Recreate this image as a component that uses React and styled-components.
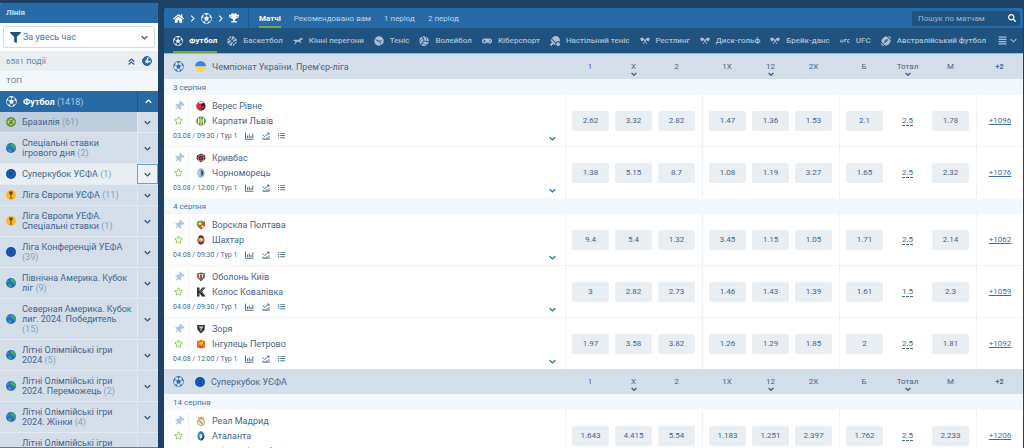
import React, { useState } from 'react';
import styled, { createGlobalStyle, css } from 'styled-components';
import {
    FaHome,
    FaTrophy,
    FaSearch,
    FaFilter,
    FaThumbtack,
    FaRegStar,
    FaBasketballBall,
    FaVolleyballBall,
    FaGamepad,
    FaTableTennis,
    FaFootballBall,
    FaAlignJustify,
    FaListUl
} from 'react-icons/fa';

const GlobalStyle = createGlobalStyle`
  * {
    box-sizing: border-box;
  }
  body {
    margin: 0;
    background: #1c4165;
    font-family: Roboto, "Liberation Sans", sans-serif;
    font-size: 9px;
    color: #48648a;
  }
  button, input, select {
    font: inherit;
    color: inherit;
    border: 0;
    padding: 0;
    margin: 0;
    background: none;
  }
  button {
    cursor: pointer;
  }
  a {
    color: inherit;
    text-decoration: none;
  }
  svg {
    display: block;
    flex: none;
  }
`;

/* ---------- icons ---------- */

const BallIcon = ({ size = 11 }) => (
    <svg width={size} height={size} viewBox="0 0 22 22" aria-hidden="true">
        <circle cx="11" cy="11" r="10" fill="none" stroke="currentColor" strokeWidth="1.3" />
        <path fill="currentColor" d="M11 6.500l4.500 3.200-1.700 5.300H8.200L6.500 9.700z" />
        <path fill="currentColor" d="M7 1.500L11 4l4-2.500C12.500.4 9.500.4 7 1.500zM1 11l3.300-2.800.2-4.700C1.800 5.500 1 8 1 11zM21 11l-3.300-2.800-.2-4.700c2.700 2 3.500 4.500 3.500 7.500zM3 17l4.400.5 1.500 3.700C6.300 20.500 4.300 19.200 3 17zM19 17l-4.400.5-1.500 3.700c2.600-.7 4.600-2 5.900-4.200z" />
        <path fill="none" stroke="currentColor" strokeWidth="1" d="M11 3v4M7 9.700L3.500 8M15 9.700L18.500 8M8.500 14.500l-1.500 3.500M13.500 14.500l1.500 3.500" />
    </svg>
);

const Chevron = ({ dir = 'down', size = 7, weight = 2 }) => {
    const turn = { down: 0, up: 180, right: 270 };
    return (
        <svg width={size} height={size} viewBox="0 0 10 10" aria-hidden="true">
            <path
                d="M1 3.200l4 3.800 4-3.800"
                fill="none"
                stroke="currentColor"
                strokeWidth={weight}
                transform={`rotate(${turn[dir]} 5 5)`}
            />
        </svg>
    );
};

const DoubleUpIcon = () => (
    <svg width="7" height="7" viewBox="0 0 10 10" aria-hidden="true">
        <path d="M1 5l4-3.500L9 5M1 9.200l4-3.500 4 3.500" fill="none" stroke="currentColor" strokeWidth="1.800" />
    </svg>
);

const WorldIcon = () => (
    <svg width="10" height="10" viewBox="0 0 20 20" aria-hidden="true">
        <circle cx="10" cy="10" r="9" fill="none" stroke="currentColor" strokeWidth="2" />
        <path fill="currentColor" d="M11 1a9 9 0 0 0-10 9c0 5 4 9 9 9 4 0 7-2 8-6l-4-1-3 3-4-2-1-3 3-2 1-3zM13 4l4 2 1 4-4 0-2-3z" />
    </svg>
);

const HorseIcon = () => (
    <svg width="10" height="8" viewBox="0 0 22 16" aria-hidden="true">
        <path fill="currentColor" d="M1 6l4-1 8 .5L17 1l5 2-1 2-3-.5-2 4.500 3 3-1 1-4-3-5-.5-3 4-3 2.500-.5-1L5 12l-.5-4L1 8z" />
    </svg>
);

const TennisIcon = () => (
    <svg width="10" height="10" viewBox="0 0 20 20" aria-hidden="true">
        <circle cx="10" cy="10" r="9.500" fill="currentColor" />
        <path fill="none" stroke="#205280" strokeWidth="1.500" d="M2 5c3 6 9 6 14 4M6 8c4 1 8 5 8 11" />
    </svg>
);

const FlagsIcon = () => (
    <svg width="10" height="8" viewBox="0 0 20 16" aria-hidden="true">
        <path fill="currentColor" d="M0 3l4-2 4 2 1 3-3 1-3 2zM20 3l-4-2-4 2-1 3 3 1 3 2z" />
        <path stroke="currentColor" strokeWidth="1.800" d="M7 4l7 10M13 4L6 14" />
    </svg>
);

const UfcIcon = () => (
    <svg width="10" height="4" viewBox="0 0 20 8" aria-hidden="true">
        <path fill="none" stroke="currentColor" strokeWidth="1.800" d="M2 1L1 6h4l1-5M8 7l1-6h5M8.500 4h4M19 1h-3l-1 5.500h4" />
    </svg>
);

const ChartIcon = () => (
    <svg width="9" height="8" viewBox="0 0 18 16" aria-hidden="true">
        <path fill="none" stroke="currentColor" strokeWidth="2" d="M1 1v13.500h16M5 12V7M8.500 12V5M12 12V8M15.500 12V3" />
    </svg>
);

const TrendIcon = () => (
    <svg width="8" height="8" viewBox="0 0 16 16" aria-hidden="true">
        <path fill="none" stroke="currentColor" strokeWidth="1.800" d="M1 5l4 4 3-2 6-5M10 2h4v4M1 14.500h14M2 14v-3M6 14v-2M10 14v-4M14 14V8" />
    </svg>
);

const BrazilFlag = () => (
    <svg width="10" height="10" viewBox="0 0 20 20" aria-hidden="true">
        <circle cx="10" cy="10" r="10" fill="#5d9b35" />
        <path fill="#f2d649" d="M10 3l8 7-8 7-8-7z" />
        <circle cx="10" cy="10" r="4" fill="#3f6f86" />
        <path d="M6.500 9q4-1 7 2.500" stroke="#dfe8d8" fill="none" />
    </svg>
);

const GlobeFlag = () => (
    <svg width="10" height="10" viewBox="0 0 20 20" aria-hidden="true">
        <circle cx="10" cy="10" r="10" fill="#2f63e0" />
        <path fill="#2fb457" d="M9 1l6 1 4 5 0 5-3 1-2-4-4-1-1-3zM3 4l3 1-1 3-4 2 1-4zM5 11l5 2 1 3-3 3-3-2z" />
    </svg>
);

const EuropeFlag = () => (
    <svg width="10" height="10" viewBox="0 0 20 20" aria-hidden="true">
        <circle cx="10" cy="10" r="10" fill="#0b4fb0" />
        <circle cx="10" cy="10" r="5.500" fill="none" stroke="#6f8f9c" strokeWidth="1.500" strokeDasharray="1.500 1.400" />
    </svg>
);

const CupFlag = () => (
    <svg width="10" height="10" viewBox="0 0 20 20" aria-hidden="true">
        <circle cx="10" cy="10" r="10" fill="#fdb827" />
        <path fill="#74491a" d="M6 3h8l-1 5-2 2v5l2 2H7l2-2v-5L7 8z" />
    </svg>
);

const UkraineFlag = () => (
    <svg width="11" height="11" viewBox="0 0 20 20" aria-hidden="true">
        <path fill="#3a86e8" d="M0 10a10 10 0 0 1 20 0z" />
        <path fill="#ffd94a" d="M0 10a10 10 0 0 0 20 0z" />
    </svg>
);

const crests = {
    veres: (
        <>
            <circle cx="10" cy="10" r="9" fill="#2b2526" />
            <path fill="#d23239" d="M10 1a9 9 0 0 0 0 18zM11 9l5 1-1 5-4 1z" />
            <path fill="#eee" d="M5 2h10l-2 3H6z" />
        </>
    ),
    karpaty: (
        <>
            <circle cx="10" cy="10" r="9.500" fill="#3f9560" />
            <path stroke="#eef5e9" strokeWidth="2" d="M5 3v14M10 1v4M10 15v4M15 3v14" />
            <path fill="#d9bd49" d="M6 6h8v7l-4 3-4-3z" />
        </>
    ),
    kryvbas: (
        <>
            <path fill="#46262c" d="M10 1l8 4 1 7-9 7-9-7 1-7z" />
            <circle cx="10" cy="10" r="6" fill="none" stroke="#e0a5a6" strokeWidth="1.500" />
            <circle cx="10" cy="10" r="3" fill="#c8323c" />
        </>
    ),
    chornomorets: (
        <>
            <ellipse cx="10" cy="10" rx="7.500" ry="9.500" fill="#8db5de" />
            <path fill="#263f63" d="M10 4c6 1 6 11 0 12 2-4 2-4 0-6 2-2 1-3 0-6z" />
            <path stroke="#fff" strokeWidth="1.500" d="M6 5v10" />
        </>
    ),
    vorskla: (
        <>
            <path fill="#56a53c" d="M2 3l8-2 8 2v8l-8 8-8-7z" />
            <path fill="#e2432f" d="M9 8l9-4v8l-8 7-5-5z" />
            <circle cx="8" cy="7" r="3" fill="#f3e35e" />
            <circle cx="13" cy="13" r="2.500" fill="#f7d7b0" />
        </>
    ),
    shakhtar: (
        <>
            <ellipse cx="10" cy="10" rx="7" ry="9.500" fill="#4b3b35" />
            <path fill="#e6793b" d="M4 6h12l1 6-7 3-7-3z" />
            <path fill="#f3d2bb" d="M7 8l3-3 3 3v3H7z" />
        </>
    ),
    obolon: (
        <>
            <path fill="#2f7b50" d="M2 3l8-2 8 2-1 9-7 7-7-7z" />
            <path fill="#e8e3dd" d="M5 4h10l-2 9H7z" />
            <path fill="#c73d3a" d="M8 5h4v9l-2 4-2-4zM3 6l3 1v3l-3 0zM17 6l-3 1v3l3 0z" />
        </>
    ),
    kolos: (
        <>
            <path fill="#26292c" d="M2 1h5v7l6-7h6l-7 8 7 10h-7l-5-7v7H2z" />
            <path stroke="#777c7f" strokeWidth="1.500" d="M3 4l14 12M15 2L4 16" />
        </>
    ),
    zorya: (
        <>
            <path fill="#34363a" d="M2 2h16l-1 10-7 7-7-7z" />
            <path fill="#c9cbcc" d="M5 5h10l-2 3-2 1v6l-2-2V9z" />
        </>
    ),
    inhulets: (
        <>
            <path fill="#f26b1f" d="M2 3l4 1 4-3 4 3 4-1 0 14-8 2-8-2z" />
            <path fill="#fbb42c" d="M6 6h8l-1 5-3 2-3-2z" />
            <path fill="#c83f1d" d="M5 13l5 2 5-2-5 5z" />
        </>
    ),
    real: (
        <>
            <circle cx="10" cy="12" r="7" fill="#f3ecd2" stroke="#c9a443" strokeWidth="2" />
            <path fill="#d9a73d" d="M4 1l3 2 3-2 3 2 3-2-2 6H6z" />
            <path stroke="#365a94" strokeWidth="2" d="M6 9l8 8" />
        </>
    ),
    atalanta: (
        <>
            <ellipse cx="10" cy="10" rx="7" ry="9.500" fill="#2f7dbb" />
            <path fill="#272e3a" d="M10 9c7-2 8 6 0 10z" />
            <path fill="#edf1f4" d="M7 6l5 1 1 6-4 3-2-5z" />
        </>
    )
};

const Crest = ({ name }) => (
    <svg width="10" height="10" viewBox="0 0 20 20" aria-hidden="true">
        {crests[name]}
    </svg>
);

/* ---------- data ---------- */

const tournaments = [
    { title: 'Бразилія', count: 61, Flag: BrazilFlag, state: 'hover' },
    { title: 'Спеціальні ставки ігрового дня', count: 2, Flag: GlobeFlag },
    { title: 'Суперкубок УЄФА', count: 1, Flag: EuropeFlag, state: 'active' },
    { title: 'Ліга Європи УЄФА', count: 11, Flag: CupFlag },
    { title: 'Ліга Європи УЕФА. Спеціальні ставки', count: 1, Flag: CupFlag },
    { title: 'Ліга Конференцій УЕФА', count: 39, Flag: EuropeFlag },
    { title: 'Північна Америка. Кубок ліг', count: 9, Flag: GlobeFlag },
    { title: 'Северная Америка. Кубок лиг. 2024. Победитель', count: 15, Flag: GlobeFlag },
    { title: 'Літні Олімпійські ігри 2024', count: 5, Flag: GlobeFlag },
    { title: 'Літні Олімпійські ігри 2024. Переможець', count: 2, Flag: GlobeFlag },
    { title: 'Літні Олімпійські ігри 2024. Жінки', count: 4, Flag: GlobeFlag },
    { title: 'Літні Олімпійські ігри 2024. Жінки. Переможець', count: 1, Flag: GlobeFlag }
];

const tabs = ['Матчі', 'Рекомендовано вам', '1 період', '2 період'];

const sports = [
    { title: 'Футбол', icon: <BallIcon size={10} /> },
    { title: 'Баскетбол', icon: <FaBasketballBall size={10} /> },
    { title: 'Кінні перегони', icon: <HorseIcon /> },
    { title: 'Теніс', icon: <TennisIcon /> },
    { title: 'Волейбол', icon: <FaVolleyballBall size={10} /> },
    { title: 'Кіберспорт', icon: <FaGamepad size={10} /> },
    { title: 'Настільний теніс', icon: <FaTableTennis size={10} /> },
    { title: 'Рестлинг', icon: <FlagsIcon /> },
    { title: 'Диск-гольф', icon: <FlagsIcon /> },
    { title: 'Брейк-данс', icon: <FlagsIcon /> },
    { title: 'UFC', icon: <UfcIcon /> },
    { title: 'Австралійський футбол', icon: <FaFootballBall size={10} /> }
];

const columns = [
    { title: '1' },
    { title: 'X', sortable: true },
    { title: '2' },
    { title: '1X' },
    { title: '12', sortable: true },
    { title: '2X' },
    { title: 'Б' },
    { title: 'Тотал', sortable: true },
    { title: 'М' }
];

const leagues = [
    {
        title: "Чемпіонат України. Прем'єр-ліга",
        Flag: UkraineFlag,
        days: [
            {
                date: '3 серпня',
                matches: [
                    { teams: [['Верес Рівне', 'veres'], ['Карпати Львів', 'karpaty']], info: '03.08 / 09:30 / Тур 1', odds: ['2.62', '3.32', '2.82', '1.47', '1.36', '1.53', '2.1', '2.5', '1.78'], more: '+1096' },
                    { teams: [['Кривбас', 'kryvbas'], ['Чорноморець', 'chornomorets']], info: '03.08 / 12:00 / Тур 1', odds: ['1.38', '5.15', '8.7', '1.08', '1.19', '3.27', '1.65', '2.5', '2.32'], more: '+1076' }
                ]
            },
            {
                date: '4 серпня',
                matches: [
                    { teams: [['Ворскла Полтава', 'vorskla'], ['Шахтар', 'shakhtar']], info: '04.08 / 09:30 / Тур 1', odds: ['9.4', '5.4', '1.32', '3.45', '1.15', '1.05', '1.71', '2.5', '2.14'], more: '+1062' },
                    { teams: [['Оболонь Київ', 'obolon'], ['Колос Ковалівка', 'kolos']], info: '04.08 / 09:30 / Тур 1', odds: ['3', '2.82', '2.73', '1.46', '1.43', '1.39', '1.61', '1.5', '2.3'], more: '+1059' },
                    { teams: [['Зоря', 'zorya'], ['Інгулець Петрово', 'inhulets']], info: '04.08 / 12:00 / Тур 1', odds: ['1.97', '3.58', '3.82', '1.26', '1.29', '1.85', '2', '2.5', '1.81'], more: '+1092' }
                ]
            }
        ]
    },
    {
        title: 'Суперкубок УЄФА',
        Flag: EuropeFlag,
        days: [
            {
                date: '14 серпня',
                matches: [
                    { teams: [['Реал Мадрид', 'real'], ['Аталанта', 'atalanta']], info: '14.08 / 12:00 / Фінал', odds: ['1.643', '4.415', '5.54', '1.183', '1.251', '2.397', '1.762', '2.5', '2.233'], more: '+1206' }
                ]
            }
        ]
    }
];

/* ---------- sidebar ---------- */

const Sidebar = () => (
    <Aside>
        <AsideTitle>Лінія</AsideTitle>
        <FilterArea>
            <FilterBox>
                <FaFilter size={11} />
                <FilterSelect aria-label="Час" defaultValue="all">
                    <option value="all">За увесь час</option>
                </FilterSelect>
                <Chevron />
            </FilterBox>
        </FilterArea>
        <CountRow>
            <CountText><small>6581</small> події</CountText>
            <button aria-label="Згорнути"><DoubleUpIcon /></button>
            <button aria-label="Країни"><WorldIcon /></button>
        </CountRow>
        <TopRow>ТОП</TopRow>
        <SportRow>
            <SportLink href="#football">
                <BallIcon />
                <span><b>Футбол</b> <i>(1418)</i></span>
            </SportLink>
            <SportToggle aria-label="Згорнути Футбол"><Chevron dir="up" /></SportToggle>
        </SportRow>
        {tournaments.map(({ title, count, Flag, state }) => (
            <TournamentRow key={title}>
                <TournamentLink href="#tournament" $state={state}>
                    <Flag />
                    <span>{title} <Count>({count})</Count></span>
                </TournamentLink>
                <TournamentToggle $state={state} aria-label={`Розгорнути ${title}`}>
                    <Chevron />
                </TournamentToggle>
            </TournamentRow>
        ))}
    </Aside>
);

/* ---------- matches ---------- */

const MatchRow = ({ match }) => (
    <tr>
        <InfoCell>
            <MatchGrid>
                <PinButton aria-label="Закріпити"><FaThumbtack size={10} /></PinButton>
                <Team><Crest name={match.teams[0][1]} />{match.teams[0][0]}</Team>
                <StarButton aria-label="В обране"><FaRegStar size={9} /></StarButton>
                <Team><Crest name={match.teams[1][1]} />{match.teams[1][0]}</Team>
            </MatchGrid>
            <InfoLine>
                <span>{match.info}</span>
                <button aria-label="Статистика"><ChartIcon /></button>
                <button aria-label="Графік"><TrendIcon /></button>
                <button aria-label="Список"><FaListUl size={7} /></button>
                <ExpandButton aria-label="Розгорнути"><Chevron /></ExpandButton>
            </InfoLine>
        </InfoCell>
        {match.odds.map((odd, i) => (
            <OddCell key={i} $pos={i % 3}>
                {columns[i].title === 'Тотал'
                    ? <TotalButton>{odd}</TotalButton>
                    : <OddButton>{odd}</OddButton>}
            </OddCell>
        ))}
        <MoreCell><a href="#more">{match.more}</a></MoreCell>
    </tr>
);

const League = ({ league }) => {
    const { Flag } = league;
    return (
        <LeagueTable>
            <thead>
                <tr>
                    <LeagueHead scope="col">
                        <LeagueTitle>
                            <BallIcon />
                            <Flag />
                            <span>{league.title}</span>
                        </LeagueTitle>
                    </LeagueHead>
                    {columns.map(({ title, sortable }, i) => (
                        <ColumnHead key={title} scope="col" $pos={i % 3}>
                            {sortable
                                ? <SortButton>{title}<Chevron size={6} weight={2.5} /></SortButton>
                                : title}
                        </ColumnHead>
                    ))}
                    <MoreHead scope="col">+2</MoreHead>
                </tr>
            </thead>
            {league.days.map(day => (
                <DayBody key={day.date}>
                    <tr><DayHead colSpan={11} scope="rowgroup">{day.date}</DayHead></tr>
                    {day.matches.map(match => <MatchRow key={match.more} match={match} />)}
                </DayBody>
            ))}
        </LeagueTable>
    );
};

const App = () => {
    const [tab, setTab] = useState('Матчі');
    const [sport, setSport] = useState('Футбол');
    const [search, setSearch] = useState('');

    return (
        <Page>
            <GlobalStyle />
            <Sidebar />
            <Main>
                <Toolbar>
                    <Crumbs>
                        <a href="#home" aria-label="Головна"><FaHome size={11} /></a>
                        <Chevron dir="right" weight={1.5} />
                        <a href="#football" aria-label="Футбол"><BallIcon /></a>
                        <Chevron dir="right" weight={1.5} />
                        <a href="#cup" aria-label="Турніри"><FaTrophy size={10} /></a>
                    </Crumbs>
                    <Tabs>
                        {tabs.map(name => (
                            <Tab key={name} $active={name === tab} onClick={() => setTab(name)}>{name}</Tab>
                        ))}
                    </Tabs>
                    <SearchBox>
                        <input
                            type="text"
                            aria-label="Пошук по матчам"
                            placeholder="Пошук по матчам"
                            value={search}
                            onChange={e => setSearch(e.target.value)}
                        />
                        <button aria-label="Знайти"><FaSearch size={8} /></button>
                    </SearchBox>
                </Toolbar>
                <SportNav>
                    {sports.map(({ title, icon }) => (
                        <SportTab key={title} $active={title === sport} onClick={() => setSport(title)}>
                            <SportIcon>{icon}</SportIcon>
                            {title}
                        </SportTab>
                    ))}
                    <SportMenu aria-label="Усі види спорту">
                        <FaAlignJustify size={9} />
                        <Chevron weight={1.5} />
                    </SportMenu>
                </SportNav>
                {leagues.map(league => <League key={league.title} league={league} />)}
            </Main>
        </Page>
    );
};

export default App;

/* ---------- styles ---------- */

const Page = styled.div`
  display: flex;
  gap: 6px;
  height: 100vh;
  overflow: hidden;
`;

const Aside = styled.aside`
  flex: none;
  width: 158px;
  margin-top: 3px;
  overflow: hidden;
  border-radius: 2px 2px 0 0;
  border-bottom: 1px solid #5a7fa5;
  background: #d4dee8;
`;

const AsideTitle = styled.h1`
  margin: 0;
  padding: 0 6px;
  font-size: 8px;
  font-weight: 700;
  line-height: 20px;
  color: #c9def0;
  background: #286aa6;
`;

const FilterArea = styled.div`
  padding: 3px;
  background: #fff;
`;

const FilterBox = styled.label`
  display: flex;
  align-items: center;
  gap: 2px;
  height: 22px;
  padding: 0 6px;
  border: 1px solid #ccd9e6;
  border-radius: 2px;
  color: #2a5f94;
  svg:first-child {
    color: #21507f;
  }
`;

const FilterSelect = styled.select`
  flex: 1;
  appearance: none;
  outline: 0;
  color: #4c759e;
`;

const CountRow = styled.div`
  display: flex;
  align-items: center;
  gap: 7px;
  height: 20px;
  padding: 0 6px;
  color: #2668a5;
  background: #e9eef2;
`;

const CountText = styled.span`
  flex: 1;
  color: #6d829a;
  small {
    font-size: 8px;
  }
`;

const TopRow = styled.div`
  padding: 0 6px;
  font-size: 8px;
  line-height: 20px;
  color: #5a7693;
  background: #f3f8fc;
`;

const rowLink = css`
  display: flex;
  flex: 1;
  align-items: center;
  gap: 6px;
  padding: 5px 4px 5px 6px;
  line-height: 10px;
`;

const rowToggle = css`
  display: flex;
  flex: none;
  align-items: center;
  justify-content: center;
  width: 21px;
`;

const SportRow = styled.div`
  display: flex;
  height: 21px;
  color: #fff;
  background: #286aa6;
`;

const SportLink = styled.a`
  ${rowLink}
  b {
    font-weight: 700;
  }
  i {
    font-style: normal;
    color: #a9c8e4;
  }
`;

const SportToggle = styled.button`
  ${rowToggle}
  border-left: 1px solid #1f5a91;
`;

const TournamentRow = styled.div`
  display: flex;
  border-bottom: 1px solid #e3eaf1;
`;

const linkColors = {
    hover: '#bfcfdd',
    active: '#e9eef2'
};

const TournamentLink = styled.a`
  ${rowLink}
  color: #40668f;
  background: ${p => linkColors[p.$state] || 'transparent'};
`;

const TournamentToggle = styled.button`
  ${rowToggle}
  color: #2c5a88;
  border: 1px solid transparent;
  border-left-color: #e3eaf1;
  ${p => p.$state === 'active' && css`
    border-color: #6d9be8;
    background: #eef2f6;
  `}
`;

const Count = styled.span`
  color: #7fa3c6;
`;

const Main = styled.main`
  flex: 1;
  min-width: 0;
  margin-top: 8px;
  padding-right: 1px;
  overflow: hidden;
`;

const Toolbar = styled.header`
  display: flex;
  align-items: center;
  height: 20px;
  padding-right: 3px;
  border-radius: 2px 2px 0 0;
  background: #286aa6;
`;

const Crumbs = styled.nav`
  display: flex;
  align-items: center;
  align-self: stretch;
  gap: 5px;
  width: 85px;
  padding-left: 9px;
  border-right: 1px solid #1f5a91;
  color: #fff;
`;

const Tabs = styled.div`
  display: flex;
  flex: 1;
  align-self: stretch;
  gap: 13px;
  padding-left: 10px;
`;

const Tab = styled.button`
  padding-top: 2px;
  font-size: 8px;
  color: ${p => (p.$active ? '#fff' : '#bcd5ec')};
  font-weight: ${p => (p.$active ? 700 : 400)};
  border-bottom: 2px solid ${p => (p.$active ? '#6fa748' : 'transparent')};
`;

const SearchBox = styled.div`
  display: flex;
  align-items: center;
  width: 108px;
  height: 15px;
  padding: 0 4px 0 6px;
  border-radius: 2px;
  color: #fff;
  background: #205280;
  input {
    flex: 1;
    min-width: 0;
    font-size: 8px;
    outline: 0;
  }
  input::placeholder {
    color: #9cb9d4;
    opacity: 1;
  }
`;

const SportNav = styled.nav`
  display: flex;
  gap: 10px;
  height: 26px;
  padding: 0 6px 0 9px;
  overflow: hidden;
  border-bottom: 1px solid #9fb2c6;
  background: #205280;
`;

const SportTab = styled.button`
  display: flex;
  flex: none;
  align-items: center;
  gap: 6px;
  padding-top: 2px;
  font-size: 8px;
  font-weight: ${p => (p.$active ? 700 : 500)};
  white-space: nowrap;
  color: ${p => (p.$active ? '#fff' : '#a9c0d5')};
  border-bottom: 2px solid ${p => (p.$active ? '#6fa748' : 'transparent')};
`;

const SportIcon = styled.span`
  display: flex;
  justify-content: center;
  width: 10px;
`;

const SportMenu = styled.button`
  display: flex;
  flex: none;
  align-items: center;
  gap: 3px;
  margin-left: auto;
  color: #a9c0d5;
`;

const LeagueTable = styled.table`
  width: 100%;
  table-layout: fixed;
  border-spacing: 0;
  background: #fff;
  th, td {
    padding: 0;
    font-weight: 400;
  }
`;

// the three cells of a group are 47, 43 and 47 wide, with the spare room outside
const cellWidth = ['47px', '43px', '47px'];
const cellPadding = ['0 3px 0 6px', '0 3px', '0 7px 0 3px'];

const LeagueHead = styled.th`
  height: 25px;
  text-align: left;
  background: #d4dee8;
`;

const LeagueTitle = styled.div`
  display: flex;
  align-items: center;
  gap: 11px;
  padding-left: 9px;
  > svg:first-child {
    color: #2f6da6;
  }
  span {
    margin-left: -5px;
  }
`;

const ColumnHead = styled.th`
  width: ${p => cellWidth[p.$pos]};
  font-size: 8px;
  background: #d4dee8;
  && {
    padding: ${p => cellPadding[p.$pos]};
  }
`;

const SortButton = styled.button`
  position: relative;
  svg {
    position: absolute;
    top: 100%;
    left: calc(50% - 3px);
  }
`;

const MoreHead = styled.th`
  width: 47px;
  font-size: 7px;
  background: #d4dee8;
  && {
    font-weight: 700;
  }
`;

const DayBody = styled.tbody`
  tr:not(:first-child) td {
    height: 52px;
    border-bottom: 1px solid #edf1f5;
  }
  tr:last-child:last-child td {
    height: 51px;
    border-bottom: 0;
  }
`;

const DayHead = styled.th`
  height: 16px;
  font-size: 8px;
  text-align: left;
  color: #3f74a8;
  background: #f3f8fc;
  && {
    padding-left: 9px;
  }
`;

const InfoCell = styled.td`
  vertical-align: top;
  && {
    padding: 3px 9px 0;
  }
`;

const MatchGrid = styled.div`
  display: grid;
  grid-template-columns: 16px 1fr;
  grid-auto-rows: 15px;
`;

const MarkButton = styled.button`
  display: flex;
  align-items: center;
  padding-left: 1px;
  border-right: 1px solid #edf1f5;
`;

const PinButton = styled(MarkButton)`
  color: #b5c9dd;
  svg {
    transform: rotate(45deg);
  }
`;

const StarButton = styled(MarkButton)`
  color: #8dbf4e;
`;

const Team = styled.div`
  display: flex;
  align-items: center;
  gap: 6px;
  padding-left: 7px;
`;

const InfoLine = styled.div`
  display: flex;
  align-items: center;
  gap: 8px;
  height: 15px;
  font-size: 7px;
  button {
    color: #4e6f92;
  }
`;

const ExpandButton = styled.button`
  margin-left: auto;
  padding-top: 6px;
  && {
    color: #2d70b0;
  }
`;

const OddCell = styled.td`
  text-align: center;
  border-left: ${p => (p.$pos === 0 ? '1px solid #edf1f5' : '0')};
  && {
    padding: ${p => cellPadding[p.$pos]};
  }
`;

const OddButton = styled.button`
  width: 100%;
  height: 20px;
  border-radius: 2px;
  font-size: 8px;
  background: #e9eef2;
`;

const TotalButton = styled.button`
  font-size: 8px;
  border-bottom: 1px dashed #48648a;
`;

const MoreCell = styled.td`
  font-size: 8px;
  text-align: center;
  color: #3f6f9f;
  border-left: 1px solid #edf1f5;
  a {
    text-decoration: underline;
  }
`;
